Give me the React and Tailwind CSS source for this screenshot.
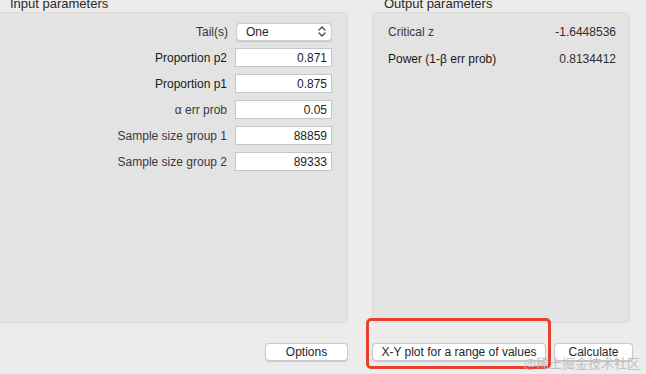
import React from 'react';

const inputs = [
  { label: 'Proportion p2', value: '0.871', dark: true },
  { label: 'Proportion p1', value: '0.875', dark: true },
  { label: 'α err prob', value: '0.05' },
  { label: 'Sample size group 1', value: '88859' },
  { label: 'Sample size group 2', value: '89333' },
];

const outputs = [
  { label: 'Critical z', value: '-1.6448536' },
  { label: 'Power (1-β err prob)', value: '0.8134412', dark: true },
];

function UpDown() {
  return (
    <svg width="8" height="11" viewBox="0 0 8 11" fill="none" stroke="#444" strokeWidth="1.3" strokeLinecap="round" strokeLinejoin="round">
      <path d="M1 4 L4 1 L7 4" />
      <path d="M1 7 L4 10 L7 7" />
    </svg>
  );
}

function Button({ children, className = '' }) {
  return (
    <button className={`h-[18px] rounded-[4px] bg-white border border-[#c9c9c9] shadow-[0_0.5px_1px_rgba(0,0,0,0.15)] text-[12px] leading-none text-[#262626] ${className}`}>
      {children}
    </button>
  );
}

export default function App() {
  return (
    <div
      className="relative w-[646px] h-[374px] overflow-hidden bg-[#ececec] text-[#262626]"
      style={{ fontFamily: '"Liberation Sans", Arial, sans-serif' }}
    >
      <div className="flex gap-[24px]">
        {/* Input parameters */}
        <div className="w-[348px] flex flex-col">
          <div className="h-[16px] -mt-[4px] pl-[10px] text-[13px] leading-[16px] text-[#2a2a2a]">Input parameters</div>
          <div className="h-[311px] bg-[#e3e3e3] rounded-r-[5px] border border-l-0 border-[#dadada] pt-[9px] pr-[15px]">
            <div className="flex flex-col gap-[7px]">
              <div className="flex items-center justify-end gap-[8px] h-[19px]">
                <span className="text-[12px] text-[#333]">Tail(s)</span>
                <div className="w-[96px] h-[18px] rounded-[4px] bg-white border border-[#cfcfcf] shadow-[0_0.5px_1px_rgba(0,0,0,0.15)] flex items-center justify-between pl-[9px] pr-[5px] text-[12px]">
                  <span>One</span>
                  <UpDown />
                </div>
              </div>
              {inputs.map((r) => (
                <div key={r.label} className="flex items-center justify-end gap-[8px] h-[19px]">
                  <span className={`text-[12px] ${r.dark ? 'text-[#1a1a1a]' : 'text-[#3a3a3a]'}`}>{r.label}</span>
                  <div className="w-[97px] h-[19px] bg-white border border-[#c6c6c6] flex items-center justify-end pr-[4px] text-[12px] text-[#1e1e1e]">
                    {r.value}
                  </div>
                </div>
              ))}
            </div>
          </div>
        </div>

        {/* Output parameters */}
        <div className="w-[258px] flex flex-col">
          <div className="h-[16px] -mt-[4px] pl-[12px] text-[13px] leading-[16px] text-[#2a2a2a]">Output parameters</div>
          <div className="h-[311px] bg-[#e3e3e3] rounded-[5px] border border-[#dadada] pt-[11px] pl-[15px] pr-[13px] flex flex-col gap-[12px]">
            {outputs.map((r) => (
              <div key={r.label} className="flex items-center justify-between h-[15px] text-[12px]">
                <span className={r.dark ? 'text-[#1a1a1a]' : 'text-[#3a3a3a]'}>{r.label}</span>
                <span className="text-[#2e2e2e]">{r.value}</span>
              </div>
            ))}
          </div>
        </div>
      </div>

      {/* Buttons */}
      <div className="flex mt-[20px]">
        <Button className="ml-[265px] w-[83px]">Options</Button>
        <Button className="ml-[24px] w-[174px]">X-Y plot for a range of values</Button>
        <Button className="ml-[8px] w-[79px]">Calculate</Button>
      </div>

      {/* annotation box */}
      <div className="absolute left-[366px] top-[318px] w-[185px] h-[51px] border-[3px] border-[#e5412e] rounded-[5px]" />

      {/* watermark */}
      <div
        className="absolute right-[6px] top-[353px] text-[13px] text-[#bdbdbd] opacity-90"
        style={{ fontFamily: '"Noto Sans CJK SC", sans-serif' }}
      >
        @稀土掘金技术社区
      </div>
    </div>
  );
}
